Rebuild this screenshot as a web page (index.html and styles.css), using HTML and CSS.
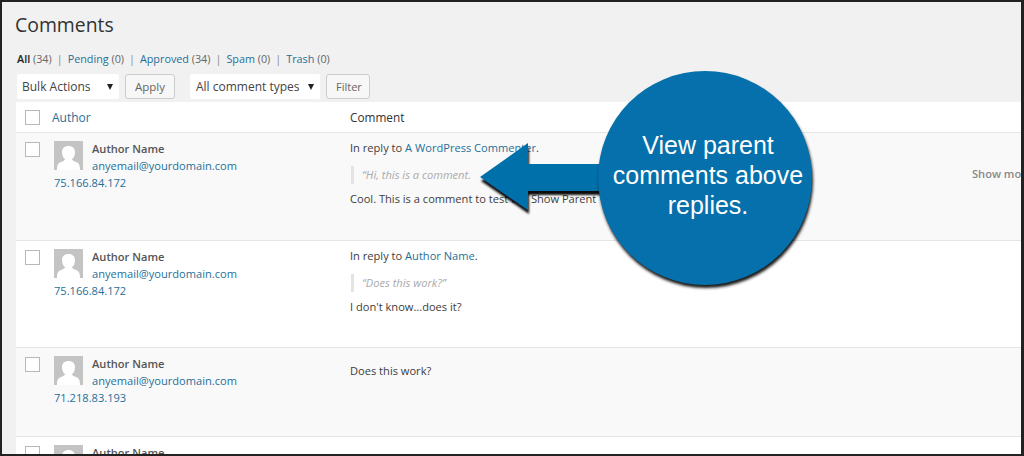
FILE: index.html
```html
<!DOCTYPE html>
<html lang="en">
<head>
<meta charset="utf-8">
<title>Comments</title>
<link rel="stylesheet" href="styles.css">
</head>
<body>
<div class="frame">
  <h1 class="title">Comments</h1>
  <ul class="views">
    <li><b>All</b> <span>(34)</span></li>
    <li><a>Pending</a> <span>(0)</span></li>
    <li><a>Approved</a> <span>(34)</span></li>
    <li><a>Spam</a> <span>(0)</span></li>
    <li><a>Trash</a> <span>(0)</span></li>
  </ul>
  <div class="filters">
    <div class="select bulk">Bulk Actions<i></i></div>
    <div class="btn apply">Apply</div>
    <div class="select types">All comment types<i></i></div>
    <div class="btn filter">Filter</div>
  </div>
  <div class="table">
    <div class="row head">
      <div class="cb"></div>
      <a class="author-h">Author</a>
      <div>Comment</div>
    </div>
    <div class="row alt r1">
      <div class="cb"></div>
      <div class="author">
        <svg class="avatar" viewBox="0 0 29 29"><rect width="29" height="29" fill="#c4c4c4"/><path d="M3 29c0-5 1-7 4-8 3-1 4-2 4-3-2-1-3-4-3-7 0-4 3-6 6.500-6s6.500 2 6.500 6c0 3-1 6-3 7 0 1 1 2 4 3 3 1 4 3 4 8z" fill="#fff"/></svg>
        <div class="who"><strong>Author Name</strong><a>anyemail@yourdomain.com</a></div>
        <a class="ip">75.166.84.172</a>
      </div>
      <div class="comment">
        <p>In reply to <a>A WordPress Commenter</a>.</p>
        <blockquote>“Hi, this is a comment.</blockquote>
        <p>Cool. This is a comment to test the Show Parent</p>
      </div>
      <div class="more">Show more</div>
    </div>
    <div class="row r2">
      <div class="cb"></div>
      <div class="author">
        <svg class="avatar" viewBox="0 0 29 29"><rect width="29" height="29" fill="#c4c4c4"/><path d="M3 29c0-5 1-7 4-8 3-1 4-2 4-3-2-1-3-4-3-7 0-4 3-6 6.500-6s6.500 2 6.500 6c0 3-1 6-3 7 0 1 1 2 4 3 3 1 4 3 4 8z" fill="#fff"/></svg>
        <div class="who"><strong>Author Name</strong><a>anyemail@yourdomain.com</a></div>
        <a class="ip">75.166.84.172</a>
      </div>
      <div class="comment">
        <p>In reply to <a>Author Name</a>.</p>
        <blockquote>“Does this work?”</blockquote>
        <p>I don't know...does it?</p>
      </div>
    </div>
    <div class="row alt r3">
      <div class="cb"></div>
      <div class="author">
        <svg class="avatar" viewBox="0 0 29 29"><rect width="29" height="29" fill="#c4c4c4"/><path d="M3 29c0-5 1-7 4-8 3-1 4-2 4-3-2-1-3-4-3-7 0-4 3-6 6.500-6s6.500 2 6.500 6c0 3-1 6-3 7 0 1 1 2 4 3 3 1 4 3 4 8z" fill="#fff"/></svg>
        <div class="who"><strong>Author Name</strong><a>anyemail@yourdomain.com</a></div>
        <a class="ip">71.218.83.193</a>
      </div>
      <div class="comment"><p>Does this work?</p></div>
    </div>
    <div class="row r4">
      <div class="cb"></div>
      <div class="author">
        <svg class="avatar" viewBox="0 0 29 29"><rect width="29" height="29" fill="#c4c4c4"/><path d="M3 29c0-5 1-7 4-8 3-1 4-2 4-3-2-1-3-4-3-7 0-4 3-6 6.500-6s6.500 2 6.500 6c0 3-1 6-3 7 0 1 1 2 4 3 3 1 4 3 4 8z" fill="#fff"/></svg>
        <div class="who"><strong>Author Name</strong></div>
      </div>
    </div>
  </div>
  <svg class="arrow" viewBox="0 0 140 90" width="140" height="90">
    <defs><filter id="sh" x="-10%" y="-10%" width="130%" height="130%"><feDropShadow dx="1" dy="4" stdDeviation="0.800" flood-color="#000" flood-opacity=".95"/></filter></defs>
    <path d="M2 36 50 2V23H140V50H50V69z" fill="#0570ab" filter="url(#sh)"/>
  </svg>
  <div class="bubble">View parent comments above replies.</div>
</div>
</body>
</html>
```
FILE: styles.css
```css
* { box-sizing: border-box; }
html, body { margin: 0; padding: 0; }
body { font-family: "Open Sans", "Liberation Sans", sans-serif; font-size: 11px; color: #444; }
.frame {
  position: relative;
  width: 1024px;
  height: 456px;
  overflow: hidden;
  background: #f1f1f1;
  border: 2px solid #222;
  border-right-width: 3px;
  padding: 0 0 0 14px;
}
a { color: #1f6f99; }
.title { margin: 9px 0 0 -1px; font-size: 19.400px; line-height: 28px; font-weight: 400; color: #333; }
.views { display: flex; margin: 12px 0 0 1px; padding: 0; list-style: none; font-size: 10.800px; line-height: 16px; color: #666; }
.views li + li::before { content: "|"; margin: 0 5px; color: #888; }
.views b { font-weight: 600; color: #222; }
.filters { display: flex; align-items: center; height: 26px; margin: 6px 0 0 1px; }
.select { position: relative; height: 25px; line-height: 25px; background: #fff; padding-left: 5px; font-size: 12px; color: #444; border-radius: 2px; }
.select i { position: absolute; right: 6px; top: 10px; border: 3.500px solid transparent; border-top: 6px solid #222; border-bottom: 0; }
.bulk { width: 102px; }
.types { width: 130px; padding-left: 6px; }
.btn { height: 25px; line-height: 23px; border: 1px solid #ccc; border-radius: 3px; background: #f7f7f7; padding: 0 9px; color: #666; font-size: 11.500px; margin-left: 6px; }
.apply { width: 50px; margin-right: 15px; }
.filter { width: 44px; font-size: 11px; }
.table { margin-top: 3px; background: #fff; }
.row { display: grid; grid-template-columns: 36px 298px 622px 1fr; border-bottom: 1px solid #e5e5e5; overflow: hidden; background: #fff; }
.alt { background: #f9f9f9; }
.head { height: 31px; align-items: center; font-size: 11.800px; color: #333; }
.head .cb { margin-top: 0; }
.r1 { height: 108px; }
.r2 { height: 107px; }
.r3 { height: 89px; }
.r4 { height: 30px; }
.cb { width: 15px; height: 15px; margin: 9px 0 0 9px; background: #fff; border: 1px solid #b4b9be; }
.author-h { font-size: 12px; }
.author { display: grid; grid-template-columns: 29px auto; column-gap: 9px; align-content: start; padding: 8px 0 0 2px; }
.avatar { display: block; width: 29px; height: 29px; }
.who { display: flex; flex-direction: column; margin-top: -1px; font-size: 11.100px; line-height: 17px; }
.who strong { font-weight: 600; color: #555; }
.ip { grid-column: 1 / 3; margin-top: 0; font-size: 11.100px; line-height: 17px; }
.comment { padding: 6px 0 0; font-size: 11.100px; line-height: 18px; color: #3c3c3c; }
.comment p { margin: 0; }
.comment blockquote { margin: 9px 0 6px 1px; padding-left: 8px; border-left: 3px solid #e3e3e3; font-style: italic; color: #aaa; line-height: 18px; }
.r3 .comment { padding-top: 14px; }
.more { white-space: nowrap; font-weight: 600; color: #888; font-size: 11.100px; padding-top: 33px; }
.arrow { position: absolute; left: 476px; top: 139px; overflow: visible; }
.bubble {
  position: absolute;
  left: 596px;
  top: 69px;
  width: 214px;
  height: 214px;
  border-radius: 50%;
  background: #0570ab;
  box-shadow: 1px 3px 3px rgba(0,0,0,.9);
  color: #fff;
  font-family: "Liberation Sans", Arial, sans-serif;
  font-size: 25px;
  line-height: 30px;
  text-align: center;
  padding: 59px 6px 0 12px;
}
```
